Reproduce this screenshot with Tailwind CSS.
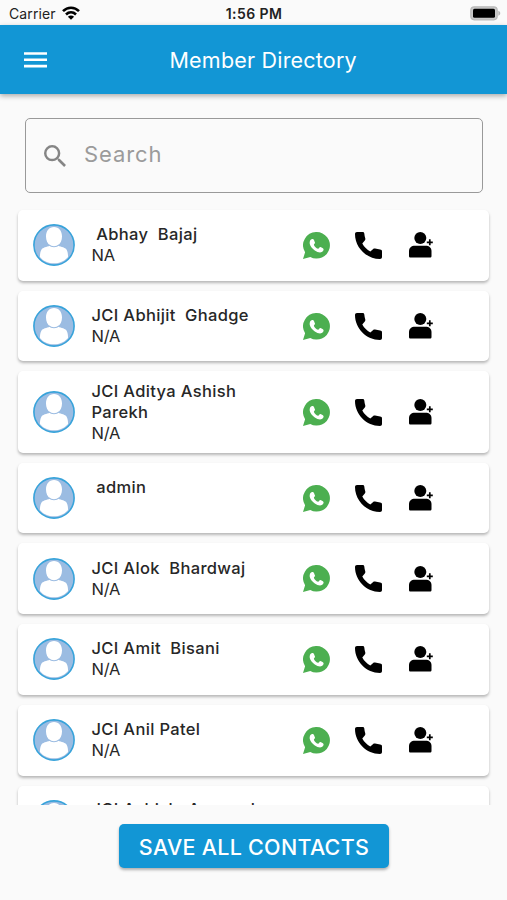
<!DOCTYPE html>
<html lang="en">
<head>
<meta charset="utf-8">
<title>Member Directory</title>
<script src="https://cdn.jsdelivr.net/npm/@tailwindcss/browser@4"></script>
</head>
<body class="w-[507px] h-[900px] overflow-hidden bg-[#fafafa] font-[Inter,sans-serif] flex flex-col">
<svg class="hidden">
  <symbol id="avatar" viewBox="0 0 42 42">
    <circle cx="21" cy="21" r="20.2" fill="#9bbce2"/>
    <path fill="#fff" d="M21 3c5 0 8 4 8 9.500c0 4-1.500 7-4 9c1 1.300 6.500 1.200 8.500 4c1.300 2 1.500 5 1.600 7.500C31 37.500 26.500 39.300 21 39.300S10.500 37.500 6.900 33c.1-2.500.3-5.500 1.600-7.500c2-2.800 7.500-2.700 8.500-4c-2.500-2-4-5-4-9C13 7 16 3 21 3z"/>
    <path fill="none" stroke="#9bbce2" stroke-width="1.100" d="M16 20.800c2.500 2.600 7.500 2.600 10 0"/>
    <circle cx="21" cy="21" r="20.100" fill="none" stroke="#38a3da" stroke-width="1.600"/>
  </symbol>
  <symbol id="whatsapp" viewBox="0 0 27 27">
    <path fill="#4caf50" d="M13.700 0A13.300 13.300 0 1 1 7.300 25L0 27l2.100-6.700A13.300 13.300 0 0 1 13.700 0z"/>
    <path fill="#fff" d="M7.300 8.300C8 7.300 9 6.600 10 7c.9.500 1.600 2.500 2 3.600c.2.900-1.200 1.700-1.100 2.300c.8 1.700 2.200 3 4.100 3.900c.8.200 1.500-1.700 2.300-1.700c.8 0 2.700 1.200 3.200 1.800c.5 1-.7 2.600-1.700 3.200c-1.700.9-4.500.2-7-1.500c-2.500-1.800-4.500-4.400-5-6.600c-.3-1.300 0-2.700.5-3.700z"/>
  </symbol>
  <symbol id="phone" viewBox="0 0 27 27">
    <path fill="#000" d="M2 0h5.500C8.800 0 9.200.6 9.300 1.600c.1 1.700.5 3.400 1 4.900c.2.800 0 1.400-.5 1.900L7.300 11.500c1.800 3.400 4.700 6.100 8 8l2.900-2.500c.6-.5 1.200-.6 1.900-.4c1.700.5 3.300.8 5 .9c1.200.1 1.900.6 1.900 1.900v5.700c0 1.200-.8 1.900-2 1.900C11.400 27 0 15.500 0 2C0 .8.800 0 2 0z"/>
  </symbol>
  <symbol id="adduser" viewBox="0 0 25 26">
    <circle cx="11.300" cy="6.100" r="6"/>
    <path d="M6 13.700h10.500c3.700 0 6 2 6 5.300V24c0 1-.6 1.600-1.600 1.600H1.600C.6 25.600 0 25 0 24v-5c0-3.300 2.300-5.300 6-5.300z"/>
    <path fill="none" stroke="#000" stroke-width="1.700" d="M17.800 10.300h6M20.800 7.300v6"/>
  </symbol>
</svg>

<header class="shrink-0 relative z-10">
  <div class="h-[25px] grid grid-cols-3 items-center pl-[9px] pr-[6px] text-[14px] text-[#222]">
    <div class="flex items-center gap-[6px] pt-[2px]">
      <span class="tracking-[.1px]">Carrier</span>
      <svg class="w-[18px] h-[14px] -mt-[2px]" viewBox="0 0 18 14" fill="none" stroke="#000" stroke-width="2.600"><path d="M1 5.200c4.600-4.600 11.400-4.600 16 0M4 8.500c2.900-2.800 7.100-2.800 10 0"/><path fill="#000" stroke="none" d="M5.900 10.700c1.900-1.500 4.300-1.500 6.200 0L9 13.700z"/></svg>
    </div>
    <div class="text-center font-semibold pt-[2px] -ml-[2px] text-[14px] tracking-[.4px] whitespace-nowrap">1:56 PM</div>
    <svg class="justify-self-end w-[31px] h-[15px] mt-[2px]" viewBox="0 0 31 15"><rect x=".8" y=".8" width="26.400" height="13" rx="3.500" fill="#c9c9c9" stroke="#b9b9b9" stroke-width="1.200"/><rect x="3" y="2.800" width="22" height="9" rx="1.500" fill="#000"/><path fill="#b5b5b5" d="M28.300 4.800c2.600.8 2.600 4.200 0 5z"/></svg>
  </div>
  <div class="h-[69px] bg-[#1296d5] shadow-[0_2px_5px_rgba(0,0,0,.32)] flex items-center">
    <svg class="ml-[24px] w-[23px] h-[16px]" viewBox="0 0 23 16" fill="#fff"><path d="M0 .2h23v2.600H0zM0 6.500h23v2.600H0zM0 12.800h23v2.600H0z"/></svg>
    <h1 class="ml-[122.500px] pt-[2px] text-[21.500px] text-white whitespace-nowrap tracking-[.2px]">Member Directory</h1>
  </div>
</header>

<div class="shrink-0 mt-[24px] ml-[25px] w-[458px] h-[75px] border border-[#999] rounded-[5px] flex items-center pl-[17.500px] gap-[18.500px]">
  <svg class="w-[22px] h-[22px]" viewBox="3 3 17.500 17.500" fill="#858585"><path d="M15.500 14h-.79l-.28-.27A6.471 6.471 0 0 0 16 9.500 6.500 6.500 0 1 0 9.500 16c1.610 0 3.090-.59 4.230-1.570l.27.28v.79l5 4.990L20.490 19l-4.990-5zm-6 0C7.010 14 5 11.990 5 9.500S7.010 5 9.500 5 14 7.010 14 9.500 11.990 14 9.500 14z"/></svg>
  <span class="pb-[2px] text-[22px] text-[#9b9b9b] tracking-[.9px]">Search</span>
</div>

<main id="list" class="shrink-0 mt-[7px] h-[604.500px] overflow-hidden px-[18px] pt-[10px] flex flex-col gap-[10px]"></main>

<footer class="shrink-0 flex justify-center pt-[19.500px] pl-[1px]">
  <button class="w-[270px] h-[44px] rounded-[5px] bg-[#1296d5] text-white text-[21.500px] font-medium shadow-[0_2px_3px_rgba(0,0,0,.3)] whitespace-nowrap tracking-[.28px] pt-[2px]">SAVE ALL CONTACTS</button>
</footer>

<script>
const members = [
  [" Abhay  Bajaj", "NA"],
  ["JCI Abhijit  Ghadge", "N/A"],
  ["JCI Aditya Ashish\nParekh", "N/A"],
  [" admin", ""],
  ["JCI Alok  Bhardwaj", "N/A"],
  ["JCI Amit  Bisani", "N/A"],
  ["JCI Anil Patel", "N/A"],
  ["JCI Ashish  Agrawal", ""]
];
document.getElementById("list").innerHTML = members.map(([name, role], i) => `
  <article class="shrink-0 ${name.includes("\n") ? "h-[81.400px]" : "h-[70.700px]"} bg-white rounded-[5px] shadow-[0_2px_3px_rgba(0,0,0,.27)] flex items-center">
    <svg class="ml-[14.500px] w-[42px] h-[42px] shrink-0"><use href="#avatar"/></svg>
    <div class="ml-[17px] w-[211.500px] shrink-0 text-[16.500px] leading-[21px] text-[#272727] ${i === 7 ? "pb-[2px]" : ""}">
      <p class="whitespace-pre font-medium tracking-[.34px]">${name}</p>
      <p class="h-[21px] text-[16.500px] tracking-[-.2px]">${role}</p>
    </div>
    <svg class="w-[27px] h-[27px] shrink-0"><use href="#whatsapp"/></svg>
    <svg class="ml-[25px] w-[27px] h-[27px] shrink-0"><use href="#phone"/></svg>
    <svg class="ml-[27px] w-[25px] h-[26px] shrink-0"><use href="#adduser"/></svg>
  </article>`).join("");
</script>
</body>
</html>
